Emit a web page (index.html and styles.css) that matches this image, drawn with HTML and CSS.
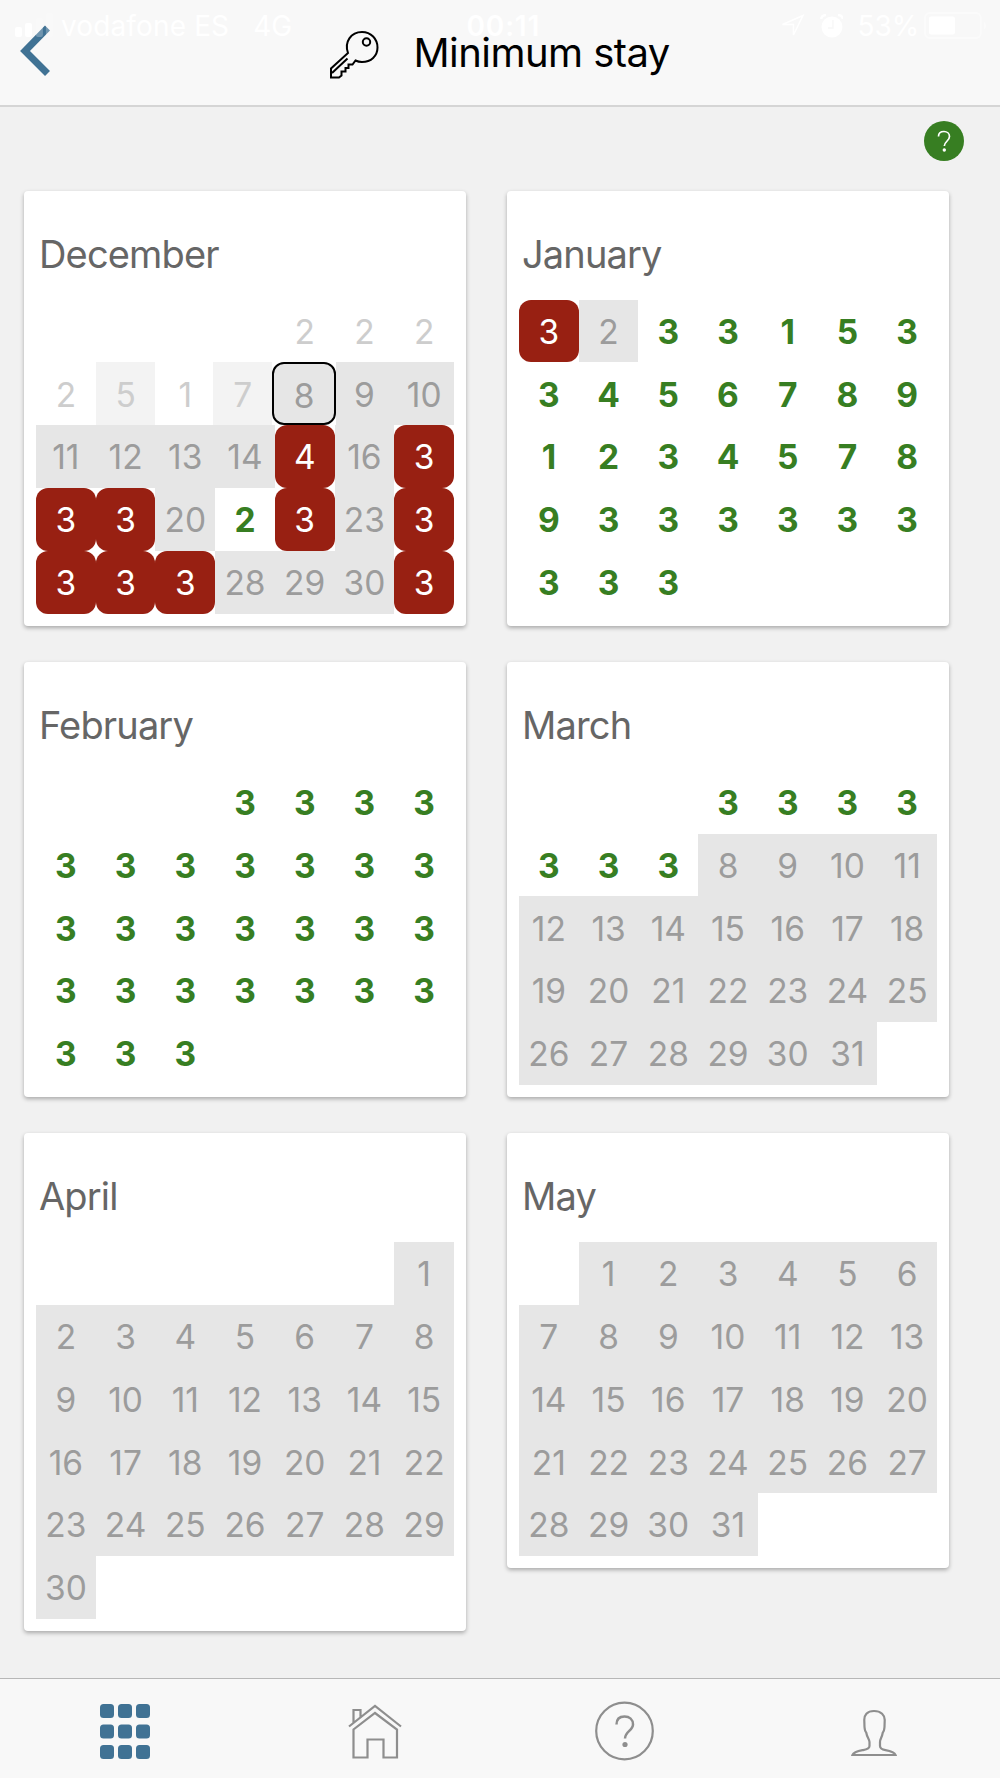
FILE: index.html
```html
<!DOCTYPE html>
<html lang="en">
<head>
<meta charset="utf-8">
<title>Minimum stay</title>
<link rel="stylesheet" href="styles.css">
</head>
<body>
<div class="app">
  <header class="header">
    <svg class="back" viewBox="0 0 34 54"><path d="M28.500 4 6 27l22.500 22.500" fill="none" stroke="#407294" stroke-width="7"/></svg>
    <div class="heading">
      <svg class="key" viewBox="0 0 50 50" fill="none" stroke="#000" stroke-width="2"><path d="M18 23C14 12 21 2 32 2c9 0 15.500 7 15.500 15.500S41 32 32 32c-2.500 0-4.500-.5-6.500-1.500l-3 4h-4v3.500h-3v3.500h-4v4L9 47.500H1v-9L18 23z"/><path d="M2 43 17.500 28.500"/><circle cx="36.500" cy="12" r="3.700"/></svg>
      <h1 class="title">Minimum stay</h1>
    </div>
  </header>

  <div class="status">
    <svg class="signal" viewBox="0 0 39 26" fill="#fff"><rect y="14" width="7" height="10" rx="2"/><rect x="10" y="10" width="7" height="14" rx="2"/><g opacity=".25"><rect x="21" y="5" width="7" height="19" rx="2"/><rect x="31" y="0" width="7" height="24" rx="2"/></g></svg>
    <span class="carrier">vodafone ES</span><span class="network">4G</span>
    <span class="clock">00:11</span>
    <svg class="location" viewBox="0 0 24 24" fill="none" stroke="#fff" stroke-width="1.500"><path d="M1.500 10.500 22 1.500 12.500 21v-10.500z"/></svg>
    <svg class="alarm" viewBox="0 0 24 24"><circle cx="12" cy="13" r="10.500" fill="#fff"/><path d="M1 5Q2 1 6 1M18 1q4 0 5 4" stroke="#fff" stroke-width="2.500" fill="none"/><path d="M13 6v8H8" fill="none" stroke="#f8f8f8" stroke-width="1.500"/></svg>
    <span class="percent">53%</span>
    <svg class="battery" viewBox="0 0 64 28"><rect x="1" y="1" width="56" height="25" rx="5" fill="none" stroke="#fff" stroke-width="2" opacity=".45"/><rect x="5" y="4.500" width="26" height="18" rx="2" fill="#fff"/><path d="M60 9q5 5 0 9z" fill="#fff" opacity=".4"/></svg>
  </div>

  <main class="content">
    <div class="toolbar"><div class="help"><svg viewBox="0 0 40 40"><path d="M14.500 15.500C14.500 12 17 10.500 20 10.500s5.500 2 5.500 5c0 4.500-5.200 5-5.200 9.500" fill="none" stroke="#fff" stroke-width="1.700"/><circle cx="20.300" cy="29" r="1.700" fill="#fff"/></svg></div></div>
    <div class="months">
      <section class="card">
        <h2 class="month">December</h2>
        <div class="days">
          <b></b><b></b><b></b><b></b><b class="past">2</b><b class="past">2</b><b class="past">2</b>
          <b class="past">2</b><b class="past shut">5</b><b class="past">1</b><b class="past shut beside">7</b><b class="today"><span>8</span></b><b class="off">9</b><b class="off">10</b>
          <b class="off">11</b><b class="off">12</b><b class="off">13</b><b class="off">14</b><b class="full">4</b><b class="off">16</b><b class="full">3</b>
          <b class="full">3</b><b class="full">3</b><b class="off">20</b><b class="free">2</b><b class="full">3</b><b class="off">23</b><b class="full">3</b>
          <b class="full">3</b><b class="full">3</b><b class="full">3</b><b class="off">28</b><b class="off">29</b><b class="off">30</b><b class="full">3</b>
        </div>
      </section>
      <section class="card">
        <h2 class="month">January</h2>
        <div class="days">
          <b class="full">3</b><b class="off">2</b><b class="free">3</b><b class="free">3</b><b class="free">1</b><b class="free">5</b><b class="free">3</b>
          <b class="free">3</b><b class="free">4</b><b class="free">5</b><b class="free">6</b><b class="free">7</b><b class="free">8</b><b class="free">9</b>
          <b class="free">1</b><b class="free">2</b><b class="free">3</b><b class="free">4</b><b class="free">5</b><b class="free">7</b><b class="free">8</b>
          <b class="free">9</b><b class="free">3</b><b class="free">3</b><b class="free">3</b><b class="free">3</b><b class="free">3</b><b class="free">3</b>
          <b class="free">3</b><b class="free">3</b><b class="free">3</b>
        </div>
      </section>
      <section class="card">
        <h2 class="month">February</h2>
        <div class="days">
          <b></b><b></b><b></b><b class="free">3</b><b class="free">3</b><b class="free">3</b><b class="free">3</b>
          <b class="free">3</b><b class="free">3</b><b class="free">3</b><b class="free">3</b><b class="free">3</b><b class="free">3</b><b class="free">3</b>
          <b class="free">3</b><b class="free">3</b><b class="free">3</b><b class="free">3</b><b class="free">3</b><b class="free">3</b><b class="free">3</b>
          <b class="free">3</b><b class="free">3</b><b class="free">3</b><b class="free">3</b><b class="free">3</b><b class="free">3</b><b class="free">3</b>
          <b class="free">3</b><b class="free">3</b><b class="free">3</b>
        </div>
      </section>
      <section class="card">
        <h2 class="month">March</h2>
        <div class="days">
          <b></b><b></b><b></b><b class="free">3</b><b class="free">3</b><b class="free">3</b><b class="free">3</b>
          <b class="free">3</b><b class="free">3</b><b class="free">3</b><b class="off">8</b><b class="off">9</b><b class="off">10</b><b class="off">11</b>
          <b class="off">12</b><b class="off">13</b><b class="off">14</b><b class="off">15</b><b class="off">16</b><b class="off">17</b><b class="off">18</b>
          <b class="off">19</b><b class="off">20</b><b class="off">21</b><b class="off">22</b><b class="off">23</b><b class="off">24</b><b class="off">25</b>
          <b class="off">26</b><b class="off">27</b><b class="off">28</b><b class="off">29</b><b class="off">30</b><b class="off">31</b>
        </div>
      </section>
      <section class="card">
        <h2 class="month">April</h2>
        <div class="days">
          <b></b><b></b><b></b><b></b><b></b><b></b><b class="off">1</b>
          <b class="off">2</b><b class="off">3</b><b class="off">4</b><b class="off">5</b><b class="off">6</b><b class="off">7</b><b class="off">8</b>
          <b class="off">9</b><b class="off">10</b><b class="off">11</b><b class="off">12</b><b class="off">13</b><b class="off">14</b><b class="off">15</b>
          <b class="off">16</b><b class="off">17</b><b class="off">18</b><b class="off">19</b><b class="off">20</b><b class="off">21</b><b class="off">22</b>
          <b class="off">23</b><b class="off">24</b><b class="off">25</b><b class="off">26</b><b class="off">27</b><b class="off">28</b><b class="off">29</b>
          <b class="off">30</b>
        </div>
      </section>
      <section class="card">
        <h2 class="month">May</h2>
        <div class="days">
          <b></b><b class="off">1</b><b class="off">2</b><b class="off">3</b><b class="off">4</b><b class="off">5</b><b class="off">6</b>
          <b class="off">7</b><b class="off">8</b><b class="off">9</b><b class="off">10</b><b class="off">11</b><b class="off">12</b><b class="off">13</b>
          <b class="off">14</b><b class="off">15</b><b class="off">16</b><b class="off">17</b><b class="off">18</b><b class="off">19</b><b class="off">20</b>
          <b class="off">21</b><b class="off">22</b><b class="off">23</b><b class="off">24</b><b class="off">25</b><b class="off">26</b><b class="off">27</b>
          <b class="off">28</b><b class="off">29</b><b class="off">30</b><b class="off">31</b>
        </div>
      </section>
    </div>
  </main>

  <nav class="tabs">
    <a class="tab"><svg width="50" height="56" viewBox="0 0 50 56" fill="#407294"><rect y="1" width="14" height="14" rx="3.500"/><rect x="18" y="1" width="14" height="14" rx="3.500"/><rect x="36" y="1" width="14" height="14" rx="3.500"/><rect y="21.500" width="14" height="14" rx="3.500"/><rect x="18" y="21.500" width="14" height="14" rx="3.500"/><rect x="36" y="21.500" width="14" height="14" rx="3.500"/><rect y="42" width="14" height="14" rx="3.500"/><rect x="18" y="42" width="14" height="14" rx="3.500"/><rect x="36" y="42" width="14" height="14" rx="3.500"/></svg></a>
    <a class="tab"><svg width="54" height="56" viewBox="0 0 54 56" fill="none" stroke="#8e8e8e" stroke-width="2.200"><path d="M1 23.500 27 3l26 20.500M5.500 19.500V7h7v7M5.500 54.500V26.500L27 10l22 16.500v28H35.500V36.500h-16v18z"/></svg></a>
    <a class="tab"><svg width="60" height="60" viewBox="0 0 60 60"><g fill="none" stroke="#8e8e8e"><circle cx="29.500" cy="30" r="28.300" stroke-width="2.200"/><path d="M21.500 23.500C21.500 17.500 24.500 15.500 29.500 15.500s8.500 3 8.500 8c0 6-8 7-8 14" stroke-width="2.500"/></g><circle cx="30" cy="43.500" r="2.600" fill="#8e8e8e"/></svg></a>
    <a class="tab"><svg width="48" height="56" viewBox="0 0 48 56" fill="none" stroke="#8e8e8e" stroke-width="2.200"><path d="M23 8C16 8 13 12 13.300 17.500L13.500 24c.2 2.500.5 4.500 1.700 5.500.8 5 3.300 6.500 3.300 9.500v4c0 3-3.500 3.500-7 4.200C6 48.200 2.500 49.500 1.500 52h43c-1-2.500-4.500-3.800-10-4.800-3.500-.7-5.500-1.500-5.500-4.200v-4c0-3 2-4.500 2.800-9.500 1.200-1 1.500-3 1.700-5.500l.2-6.500C34 12 30 8 23 8z"/></svg></a>
  </nav>
</div>
</body>
</html>
```
FILE: styles.css
```css
* { box-sizing: border-box; }
body { margin: 0; background: #f1f1f1; font-family: Inter, "Liberation Sans", sans-serif; }
.app { position: relative; display: flex; flex-direction: column; width: 1000px; height: 1778px; }

.header { display: flex; flex: none; align-items: center; height: 107px; padding-left: 19px; background: #f8f8f8; border-bottom: 2px solid #d5d5d5; }
.back { flex: none; width: 34px; height: 54px; margin-top: -4px; }
.heading { display: flex; align-items: center; margin-left: 277px; }
.key { width: 50px; height: 50px; margin-top: 4px; }
.title { margin: 0 0 0 33.500px; font-size: 40px; line-height: 48px; font-weight: 400; letter-spacing: -.55px; white-space: nowrap; }

.status { position: absolute; top: 0; left: 15px; right: 12px; display: flex; align-items: center; height: 51px; color: #fff; font-size: 28px; white-space: nowrap; }
.signal { width: 39px; height: 26px; }
.carrier { width: 193px; padding-left: 7px; letter-spacing: .15px; }
.network { width: 221px; padding-left: 7px; }
.clock { width: 315px; font-weight: 600; letter-spacing: .8px; }
.location { width: 24px; height: 24px; }
.alarm { width: 24px; height: 24px; margin-left: 15px; }
.percent { width: 66px; margin-left: 14px; }
.battery { width: 64px; height: 28px; margin-left: 1px; }

.content { flex: 1; }
.toolbar { display: flex; justify-content: flex-end; height: 84px; padding: 14px 36px 0 0; }
.help { width: 40px; height: 40px; border-radius: 50%; background: #377e22; }
.months { display: grid; grid-template-columns: 442px 442px; gap: 36.300px 41px; align-items: start; padding-left: 24px; }
.card { padding: 44px 12px 12.200px; background: #fff; border-radius: 4px; box-shadow: 0 2px 4px rgba(0, 0, 0, .3); }
.month { height: 64.500px; margin: 0; padding-left: 3px; color: #666; font-size: 38px; line-height: 39px; font-weight: 400; letter-spacing: -.85px; }
.days { display: grid; grid-template-columns: repeat(7, 1fr); grid-auto-rows: 62.850px; }
.days b { display: flex; align-items: center; justify-content: center; padding-top: 1.500px; font-size: 33.500px; font-weight: 400; }
.days .free { color: #377e22; font-weight: 700; }
.days .off { background: #e6e6e6; color: #9c9c9c; }
.days .past { color: #cdcdcd; }
.days .shut { background: #f3f3f3; }
.days .beside { margin: 0 2.700px 0 -1.700px; }
.days .full { background: #982012; color: #fff; border-radius: 12px; }
.days .today { margin: 0 -1.300px 0 -2.700px; padding: 0; background: #fff; z-index: 1; }
.today span { display: flex; flex: 1; align-items: center; justify-content: center; height: 100%; padding-top: 5px; background: #e6e6e6; border: 2px solid #000; border-radius: 12px; color: #9c9c9c; }

.tabs { display: grid; flex: none; grid-template-columns: repeat(4, 1fr); height: 100px; background: #f8f8f8; border-top: 1px solid #b7b7b7; }
.tab { display: flex; align-items: center; justify-content: center; padding-top: 5px; }
```
